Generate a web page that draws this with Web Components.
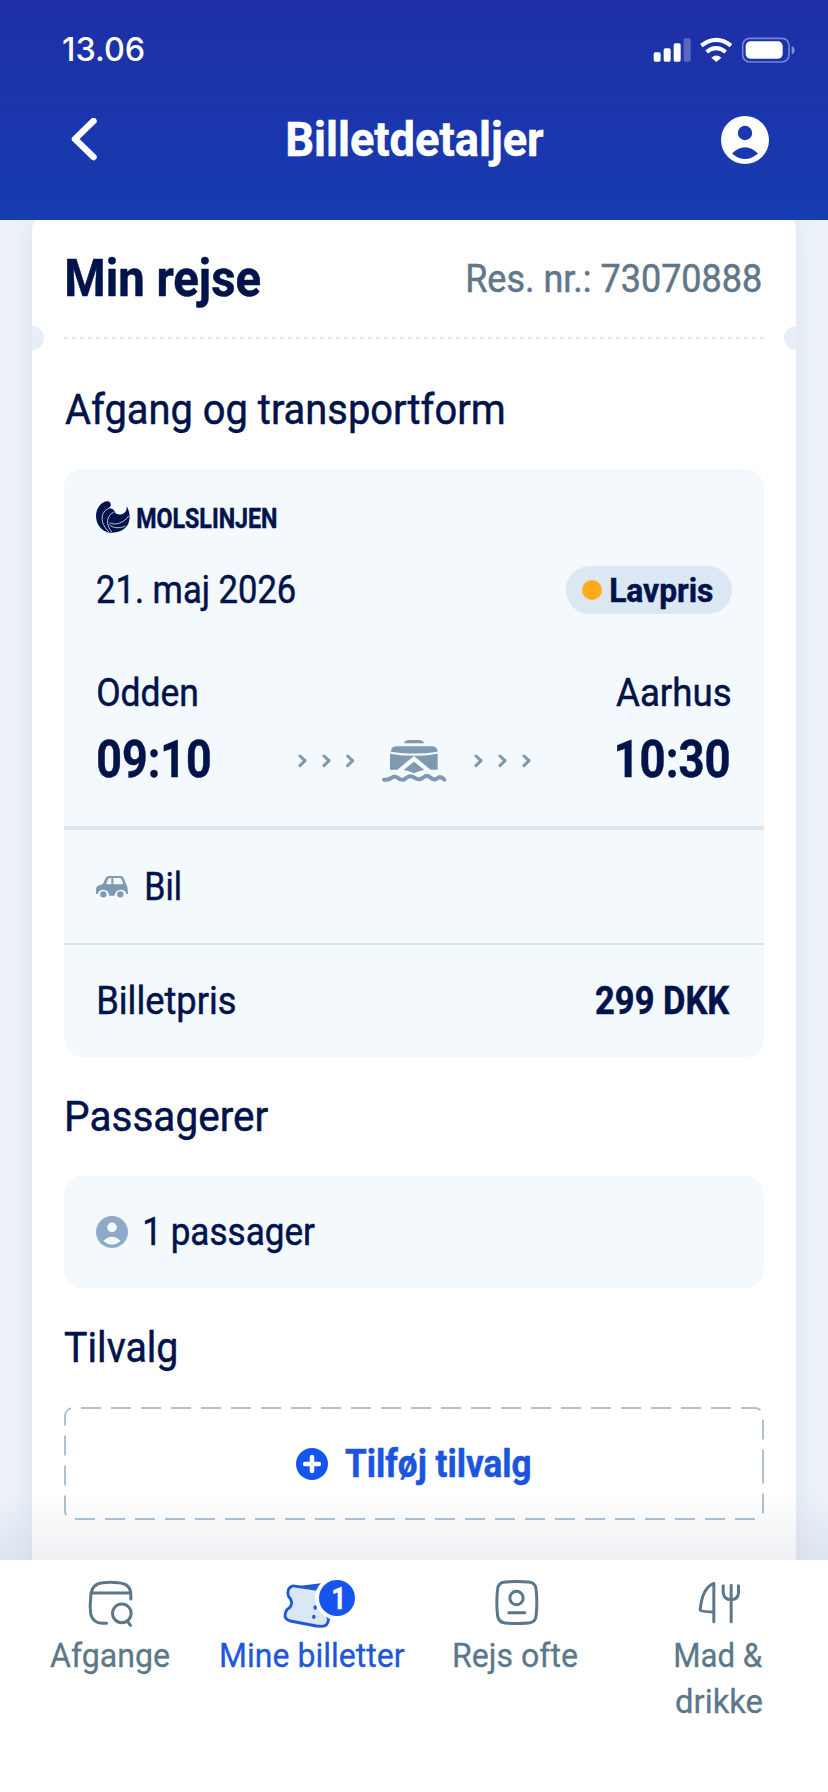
<!DOCTYPE html>
<html lang="da">
<head>
<meta charset="utf-8">
<title>Billetdetaljer</title>
<style>
html,body{margin:0;height:100%}
body{font-family:Roboto,"Liberation Sans",sans-serif;color:#00134a;background:#fff}
</style>
</head>
<body>
<ticket-app></ticket-app>
<script>
const define = (name, html, extra) => customElements.define(name, class extends HTMLElement {
  connectedCallback() {
    if (this.shadowRoot) return;
    const t = document.createElement('template');
    t.innerHTML = html;
    this.attachShadow({mode:'open'}).append(t.content.cloneNode(true));
    if (extra) extra(this);
  }
});

/* One line of text condensed so that its inked width equals the "w" attribute. */
const ctx = document.createElement('canvas').getContext('2d');
define('fit-text', `<style>
:host{display:block;flex:none;white-space:nowrap;-webkit-text-stroke:.5px currentColor}
:host([family]){-webkit-text-stroke:0}
span{display:block;width:max-content;transform-origin:0 50%}
</style><span><slot></slot></span>`, el => {
  const size = el.getAttribute('size'), weight = el.getAttribute('weight') || 400;
  const family = el.getAttribute('family') || 'Roboto', w = +el.getAttribute('w');
  ctx.font = `${weight} ${size}px ${family}`;
  const m = ctx.measureText(el.textContent);
  const k = w / (m.actualBoundingBoxLeft + m.actualBoundingBoxRight);
  el.style.cssText += `;width:${w}px;font:${weight} ${size}px/${el.getAttribute('lh') || size}px ${family},"Liberation Sans",sans-serif`;
  el.shadowRoot.querySelector('span').style.transform = `translateX(${m.actualBoundingBoxLeft * k}px) scaleX(${k})`;
});

define('status-bar', `<style>
:host{display:flex;align-items:center;justify-content:space-between;height:100px;padding:0 33px 0 63px;box-sizing:border-box}
svg{display:block;width:143px;height:28px}
</style>
<fit-text size="32" weight="500" family="Inter" w="81">13.06</fit-text>
<svg viewBox="712 106 429 84" fill="#fff">
<rect x="717" y="155" width="21" height="28" rx="5"/><rect x="747" y="143" width="21" height="40" rx="5"/><rect x="777" y="128" width="21" height="55" rx="5"/><rect x="807" y="113" width="21" height="70" rx="5" opacity=".27"/>
<g fill="none" stroke="#fff" stroke-width="12"><path d="M860 135q45-35 89 0"/><path d="M876 154q28-23 57 0"/></g><path d="M890 171q15-13 30 0l-15 13z"/>
<rect x="984" y="113" width="139" height="71" rx="21" fill="none" stroke="#7585d6" stroke-width="5"/><rect x="993" y="122" width="111" height="52" rx="14"/><path d="M1131 136q9 4 9 13t-9 12z" fill="#8190d9"/>
</svg>`);

define('app-header', `<style>
:host{display:block;height:220px;color:#fff;background:linear-gradient(#1d2fa6,#183cb1);position:relative;z-index:1}
nav{display:grid;grid-template-columns:1fr auto 1fr;align-items:center;height:80px;padding:0 59px 0 71px}
nav fit-text{margin-left:-9px}
</style>
<status-bar></status-bar>
<nav><svg width="26" height="44" viewBox="0 0 26 44"><path d="M22.500 3.500 4 21.500 22.500 39.500" transform="translate(0 -.5)" fill="none" stroke="#fff" stroke-width="6.500" stroke-linecap="round" stroke-linejoin="round"/></svg>
<fit-text size="48" weight="700" w="256">Billetdetaljer</fit-text>
<user-icon style="justify-self:end;--s:48px;--c:#fff;--i:#1939ae"></user-icon></nav>`);

define('user-icon', `<style>:host{display:block;flex:none;width:var(--s);height:var(--s)}svg{display:block;width:100%;height:100%}</style>
<svg viewBox="0 0 48 48"><circle cx="24" cy="24" r="24" style="fill:var(--c)"/><g style="fill:var(--i)"><circle cx="24" cy="17" r="7.2"/><path d="M11 37.5q13-12.500 26 0q-13 11-26 0z"/></g></svg>`);

define('mols-logo', `<style>:host{display:flex;align-items:center;gap:7px;height:32px}svg{display:block}fit-text{padding-top:3px}</style>
<svg width="34" height="32" viewBox="137 122 103 97" fill="#00134a">
<path d="M180 127C174 119 160 123 150 133C137 147 133 170 142 190C149 205 162 215 177 218C205 220 228 209 236 188C241 173 240 155 230 138C231 151 226 159 215 162C205 164 196 162 193 153C190 145 181 143 173 146C181 142 184 133 180 127z"/>
<g fill="none" stroke="#d5dfec" stroke-width="2.600"><path d="M177 144C155 151 148 178 165 203L177 217"/><path d="M191 156C169 165 165 193 185 216"/><path d="M178 188C196 197 220 189 237 167"/><path d="M177 193C184 203 206 207 226 198"/></g></svg>
<fit-text size="28" weight="700" w="139">MOLSLINJEN</fit-text>`);

define('price-pill', `<style>:host{display:flex;align-items:center;gap:9px;box-sizing:border-box;width:166px;height:48px;padding-left:16px;border-radius:24px;background:#dbe7f3}i{width:20px;height:20px;border-radius:50%;background:#fcac19}</style>
<i></i><fit-text size="34" weight="700" w="102">Lavpris</fit-text>`);

define('ferry-route', `<style>:host,svg{display:block}</style>
<svg width="236" height="48" viewBox="738 828 708 144" fill="#7f99b0">
<g fill="none" stroke="#7f99b0" stroke-width="9" stroke-linecap="round" stroke-linejoin="round">
<path d="M750 888l15 14-15 15M822 888l15 14-15 15M893 888l15 14-15 15M1278 888l15 14-15 15M1350 888l15 14-15 15M1422 888l15 14-15 15"/></g>
<path d="M1062 850q4-10 16-10h28q12 0 16 10z"/>
<path d="M1022 875q2-16 18-16h105q16 0 18 16q-70 11-141 0z"/>
<path d="M1020 881q72 13 143 0v48h-21l-50-41-50 41h-22z"/>
<path d="M1092 905l31 25q-12 2-20 5l-11 5-11-5q-8-3-20-5z"/>
<path d="M1002 959q13 2 23-6 8-7 17 0 14 11 25 2l8-5q9-4 18 3 14 9 26 0 12-10 21-1 12 11 23 2 9-7 20 5" fill="none" stroke="#7f99b0" stroke-width="12" stroke-linecap="round"/>
</svg>`);

define('trip-card', `<style>
:host{display:block;background:#f3f9fd;border-radius:18px}
.top{padding:32px 32px 40px;border-bottom:4px solid #dce6f1}
.row{display:flex;justify-content:space-between;align-items:center;padding:0 32px;height:112px}
.date{display:flex;justify-content:space-between;align-items:center;height:48px;margin-top:33px;padding-left:1px}
.city{display:flex;justify-content:space-between;height:40px;margin:59px 2px 0}
.time{display:grid;grid-template-columns:1fr auto 1fr;align-items:center;height:52px;margin:21px 0 0}
.time>:first-child{margin-left:2px}
.time>:last-child{justify-self:end;margin-right:3px}
.car{height:113px;justify-content:flex-start;gap:19px;border-bottom:2px solid #dce6f1}
</style>
<div class="top"><mols-logo></mols-logo>
<div class="date"><fit-text size="38" w="198">21. maj 2026</fit-text><price-pill></price-pill></div>
<div class="city"><fit-text size="38" lh="40" w="99">Odden</fit-text><fit-text size="38" lh="40" w="114">Aarhus</fit-text></div>
<div class="time"><fit-text size="52" weight="700" w="112">09:10</fit-text><ferry-route></ferry-route><fit-text size="52" weight="700" w="112">10:30</fit-text></div></div>
<div class="row car"><svg width="32" height="22" viewBox="138 197 96 66"><path fill="#7f99b0" fill-rule="evenodd" d="M167 203q3-6 10-6h35q7 0 9 6l10 24q3 8 3 24h-5q-3-13-18-13-14 0-18 18h-15q-2-18-18-18-13 0-17 13h-5v-12q0-13 12-15 7-1 9-4zM175 206l-6 13q-1 3 3 3h12v-19h-4q-4 0-5 3zM190 203v19h26q4 0 3-4l-5-12q-1-3-5-3z"/><g fill="#7f99b0"><circle cx="160" cy="252" r="9.500"/><circle cx="211" cy="252" r="9.500"/></g></svg><fit-text size="38" w="33">Bil</fit-text></div>
<div class="row"><fit-text style="margin-left:3px" size="38" w="136">Billetpris</fit-text><fit-text style="margin-right:2px" size="38" weight="700" w="134">299 DKK</fit-text></div>`);

define('section-title', `<style>:host{display:flex;align-items:center;height:119px;padding-left:1px}</style><slot></slot>`);

define('passenger-card', `<style>:host{display:flex;align-items:center;gap:17px;height:112px;box-sizing:border-box;padding:0 32px;border-radius:18px;background:#f3f9fd}</style>
<user-icon style="--s:32px;--c:#8dabc7;--i:#f3f9fd"></user-icon><fit-text size="38" w="170">1 passager</fit-text>`);

define('add-button', `<style>:host{display:grid;place-items:center;height:113px;color:#1b55dd}
svg.b,div{grid-area:1/1}svg{display:block}div{display:flex;align-items:center;gap:17px}</style>
<svg class="b" width="700" height="113" viewBox="0 0 700 113"><path d="M699 56.500V104a8 8 0 0 1-8 8H9a8 8 0 0 1-8-8V9a8 8 0 0 1 8-8H691a8 8 0 0 1 8 8z" fill="none" stroke="#adc2d4" stroke-width="2" stroke-dasharray="20 10"/></svg>
<div style="margin-right:2px"><svg width="32" height="32" viewBox="0 0 32 32"><circle cx="16" cy="16" r="16" fill="#1554ee"/><path d="M16 9v14M9 16h14" stroke="#fff" stroke-width="4.500" stroke-linecap="round"/></svg><fit-text size="38" weight="700" w="185">Tilføj tilvalg</fit-text></div>`);

define('ticket-sheet', `<style>
:host{display:block;position:relative;margin:-8px 32px 0;padding:9px 32px 0;height:1400px;border-radius:18px;background:#fff;box-shadow:0 0 30px rgba(30,60,110,.07)}
header{display:flex;align-items:center;justify-content:space-between;height:116px;padding:0 3px 0 3px}
hr{height:2px;margin:0 0 11px;border:0;background:repeating-linear-gradient(90deg,#e3eaee 0 4px,transparent 4px 8px)}
i{position:absolute;top:114px;width:12px;height:24px;background:#e7eef6}
i.l{left:0;border-radius:0 12px 12px 0}i.r{right:0;border-radius:12px 0 0 12px}
</style>
<header><fit-text size="52" weight="700" w="193">Min rejse</fit-text><fit-text style="color:#607689" size="38" w="293">Res. nr.: 73070888</fit-text></header>
<hr><i class="l"></i><i class="r"></i>
<section-title><fit-text size="42" w="438">Afgang og transportform</fit-text></section-title>
<trip-card></trip-card>
<section-title><fit-text style="margin-left:2px" size="42" w="201">Passagerer</fit-text></section-title>
<passenger-card></passenger-card>
<section-title><fit-text size="42" w="111">Tilvalg</fit-text></section-title>
<add-button></add-button>`);

define('nav-item', `<style>:host{display:flex;flex-direction:column;align-items:center;position:relative}</style><slot></slot>`);

define('tab-bar', `<style>
:host{display:grid;grid-template-columns:repeat(4,203px);justify-content:center;height:232px;box-sizing:border-box;padding-top:20px;background:#fff;color:#5d778a;position:relative}
:host:before{content:"";position:absolute;left:0;right:0;bottom:100%;height:70px;background:linear-gradient(rgba(20,40,90,0),rgba(20,40,90,.065))}
svg{display:block;width:60px;height:52px;overflow:visible;fill:none;stroke:currentColor;stroke-width:9;stroke-linecap:round;stroke-linejoin:round}
.on{color:#2057da}
fit-text{-webkit-text-stroke:.3px currentColor}
b{position:absolute;left:108px;top:0;width:36px;height:36px;border-radius:50%;background:#1554ee;box-shadow:0 0 0 4px #fff;color:#fff;display:grid;place-items:center}
</style>
<nav-item><svg viewBox="148.500 60 180 156"><path d="M228 190h-13q-27-1-34-26-4-26 0-56 2-37 36-40 22-3 46 0 38 2 38 37v12M181 99h119"/><circle cx="274" cy="160" r="28"/><path d="M291 184l9 12"/></svg><fit-text size="34" lh="46" w="119">Afgange</fit-text></nav-item>
<nav-item class="on"><svg viewBox="757.500 60 180 156"><path d="M811 79l59-7-13 18z" fill="#2057da" stroke-width="4"/><path d="M774 88q8-14 24-9l67 10 29 89q-2 20-19 21l-17-1-79-15q-18-6-15-22l5-12q16-8 14-24-2-10-9-16-4-10 0-21z" fill="#dbe7f5" stroke-width="8.500"/><path d="M854 141v3M850 169v3" stroke-width="10"/></svg><b><fit-text size="32" weight="700" w="9">1</fit-text></b><fit-text size="34" lh="46" w="184">Mine billetter</fit-text></nav-item>
<nav-item><svg viewBox="166.500 60 180 156"><path d="M224 66q35-3 70 0 22 2 23 23 4 37 0 76-1 22-23 24-35 3-70 0-21-2-23-24-4-38 0-76 1-21 23-23z"/><circle cx="258" cy="114" r="20"/><path d="M235 158h48"/></svg><fit-text size="34" lh="46" w="123">Rejs ofte</fit-text></nav-item>
<nav-item><svg viewBox="775.500 60 180 156"><path d="M850 185V70q-35 13-41 80 2 5 41 6M902 185V76M878 77v20q2 22 24 22t22-22V77"/></svg><fit-text size="34" lh="46" w="88">Mad &amp;</fit-text><fit-text size="34" lh="46" w="86">drikke</fit-text></nav-item>`);

define('ticket-app', `<style>
:host{display:flex;flex-direction:column;width:828px;height:1792px;overflow:hidden}
main{height:1340px;overflow:hidden;background:#edf2fa}
</style>
<app-header></app-header><main><ticket-sheet></ticket-sheet></main><tab-bar></tab-bar>`);
</script>
</body>
</html>
